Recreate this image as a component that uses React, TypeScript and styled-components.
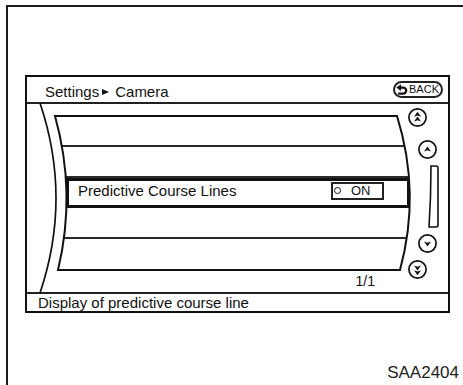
import React from "react";
import styled, { createGlobalStyle } from "styled-components";

const GlobalStyle = createGlobalStyle`
  html, body { margin: 0; padding: 0; background: #fff; }
  body { font-family: "Liberation Sans", Arial, Helvetica, sans-serif; color: #111; }
`;

const Page = styled.div`
  width: 463px;
  height: 385px;
  overflow: hidden;
  box-sizing: border-box;
  padding: 5px 0 0 6px;
`;

const Frame = styled.div`
  height: 100%;
  box-sizing: border-box;
  border-top: 2px solid #1c1c1c;
  border-left: 2px solid #1c1c1c;
  padding: 68px 4px 0 17px;
  display: flex;
  flex-direction: column;
`;

const Screen = styled.div`
  width: 425px;
  height: 238px;
  box-sizing: border-box;
  border: 2px solid #111;
  display: flex;
  flex-direction: column;
`;

const Header = styled.div`
  flex: none;
  height: 25px;
  border-bottom: 2px solid #222;
  display: flex;
  align-items: center;
  justify-content: space-between;
  padding: 0 5px 0 18px;
`;

const Breadcrumb = styled.div`
  display: flex;
  align-items: center;
  font-size: 15px;
  padding-top: 3px;
`;

const Crumb = styled.span`
  white-space: nowrap;
`;

const CrumbArrow = styled.span`
  width: 0;
  height: 0;
  border-left: 7px solid #111;
  border-top: 3.5px solid transparent;
  border-bottom: 3.5px solid transparent;
  margin: 1px 6px 0 3px;
`;

const BackButton = styled.div`
  display: flex;
  align-items: center;
  gap: 1px;
  height: 13px;
  padding: 0 2px 0 1px;
  border: 2px solid #222;
  border-radius: 9px;
  font-size: 11px;
  line-height: 1;
`;

const Body = styled.div`
  flex: 1;
  position: relative;
  display: flex;
  align-items: flex-start;
`;

const Bezel = styled.svg`
  position: absolute;
  left: 0;
  top: 0;
  width: 100%;
  height: 100%;
  overflow: visible;
  pointer-events: none;
`;

const MainColumn = styled.div`
  margin: 12px 0 0 28px;
  width: 355px;
  display: flex;
  flex-direction: column;
`;

const List = styled.div`
  position: relative;
  height: 154px;
`;

const Rows = styled.div`
  height: 100%;
  display: grid;
  grid-template-rows: repeat(5, 1fr);
  clip-path: path("M0,0 L342,0 Q366,77 345,154 L3,154 Q21.5,77 0,0 Z");
`;

const Row = styled.div<{ $selected?: boolean; $last?: boolean }>`
  box-sizing: border-box;
  display: flex;
  align-items: center;
  font-size: 15px;
  border-bottom: ${(p) => (p.$last ? "none" : "2px solid #2a2a2a")};
  ${(p) =>
    p.$selected &&
    `
    margin: 0 0 0 11px;
    border: 3px solid #111;
    padding: 0 23px 4px 9px;
  `}
`;

const RowLabel = styled.span`
  flex: 1;
  white-space: nowrap;
`;

const Toggle = styled.span`
  display: flex;
  align-items: center;
  height: 14px;
  width: 48px;
  padding-left: 1px;
  border: 2px solid #222;
  font-size: 13px;
`;

const ToggleDot = styled.span`
  width: 7px;
  height: 7px;
  box-sizing: border-box;
  border: 1.3px solid #111;
  border-radius: 50%;
  margin-right: 10px;
`;

const Outline = styled.svg`
  position: absolute;
  left: 0;
  top: 0;
  width: 100%;
  height: 100%;
  overflow: visible;
  pointer-events: none;
`;

const PageNumber = styled.div`
  text-align: right;
  padding-right: 35px;
  margin-top: 3px;
  font-size: 14px;
`;

const ScrollColumn = styled.div`
  margin: 4px 0 0 -2px;
  display: flex;
  flex-direction: column;
  align-items: flex-start;
`;

const ScrollButton = styled.svg<{ $shift: number; $gap: number }>`
  display: block;
  width: 19px;
  height: 19px;
  margin-left: ${(p) => p.$shift}px;
  margin-top: ${(p) => p.$gap}px;
`;

const Track = styled.svg`
  display: block;
  width: 12px;
  height: 63px;
  margin: 6px 0 0 19px;
`;

const Footer = styled.div`
  flex: none;
  height: 17px;
  border-top: 2px solid #222;
  padding-left: 11px;
  display: flex;
  align-items: center;
  font-size: 15px;
  white-space: nowrap;
`;

const Caption = styled.div`
  align-self: flex-end;
  margin-top: 50px;
  font-size: 17px;
  color: #222;
`;

const BackIcon = () => (
  <svg width="12" height="12" viewBox="0 0 12 12">
    <polygon points="0.3,3.6 5,0.2 5,7" fill="#111" />
    <path d="M4.2,3.6 H7.2 A3,3 0 0 1 7.2,9.6 H2.2" fill="none" stroke="#111" strokeWidth="2.3" />
  </svg>
);

const head = (y: number) => `M9.5,${y} L13,${y + 5} L9.5,${y + 3.6} L6,${y + 5} Z`;

type ScrollKind = "double-up" | "up" | "down" | "double-down";

const ScrollBtn = ({ kind, shift, gap }: { kind: ScrollKind; shift: number; gap: number }) => {
  const down = kind === "down" || kind === "double-down";
  const double = kind === "double-up" || kind === "double-down";
  const d = double ? `${head(3.8)} ${head(8.6)}` : head(6.6);
  return (
    <ScrollButton $shift={shift} $gap={gap} viewBox="0 0 19 19">
      <circle cx="9.5" cy="9.5" r="8.6" fill="#fff" stroke="#111" strokeWidth="1.7" />
      <path d={d} fill="#111" transform={down ? "rotate(180 9.5 9.5)" : undefined} />
    </ScrollButton>
  );
};

export default function App() {
  return (
    <Page>
      <GlobalStyle />
      <Frame>
        <Screen>
          <Header>
            <Breadcrumb>
              <Crumb>Settings</Crumb>
              <CrumbArrow />
              <Crumb>Camera</Crumb>
            </Breadcrumb>
            <BackButton>
              <BackIcon />
              <span>BACK</span>
            </BackButton>
          </Header>
          <Body>
            <Bezel>
              <path d="M13,-1 Q45,94 13,189" fill="none" stroke="#111" strokeWidth="1.7" />
            </Bezel>
            <MainColumn>
              <List>
                <Rows>
                  <Row />
                  <Row />
                  <Row $selected>
                    <RowLabel>Predictive Course Lines</RowLabel>
                    <Toggle>
                      <ToggleDot />
                      ON
                    </Toggle>
                  </Row>
                  <Row />
                  <Row $last />
                </Rows>
                <Outline>
                  <path
                    d="M0,0 L342,0 Q366,77 345,154 L3,154 Q21.5,77 0,0 Z"
                    fill="none"
                    stroke="#111"
                    strokeWidth="2"
                  />
                </Outline>
              </List>
              <PageNumber>1/1</PageNumber>
            </MainColumn>
            <ScrollColumn>
              <ScrollBtn kind="double-up" shift={0} gap={0} />
              <ScrollBtn kind="up" shift={10} gap={13} />
              <Track viewBox="0 0 12 63">
                <path
                  d="M4,1 H9 A2,2 0 0 1 11,3 V60 A2,2 0 0 1 9,62 H2 Q4,32 4,1 Z"
                  fill="none"
                  stroke="#111"
                  strokeWidth="1.6"
                />
              </Track>
              <ScrollBtn kind="down" shift={10} gap={6} />
              <ScrollBtn kind="double-down" shift={0} gap={7} />
            </ScrollColumn>
          </Body>
          <Footer>Display of predictive course line</Footer>
        </Screen>
        <Caption>SAA2404</Caption>
      </Frame>
    </Page>
  );
}
